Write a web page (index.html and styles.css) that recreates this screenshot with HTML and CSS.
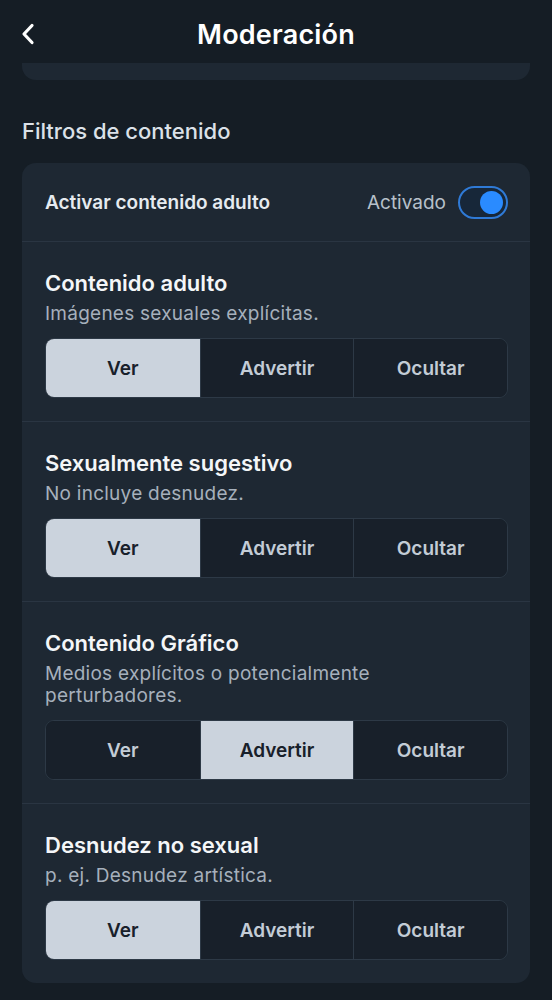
FILE: index.html
```html
<!DOCTYPE html>
<html lang="es">
<head>
    <meta charset="UTF-8">
    <meta name="viewport" content="width=device-width, initial-scale=1.0">
    <title>Moderación</title>
    <link rel="stylesheet" href="styles.css">
</head>
<body>

<div class="screen">

    <!-- Header -->
    <header class="topbar">
        <button class="back" aria-label="Atrás">
            <svg width="18" height="24" viewBox="0 0 18 24" fill="none">
                <path d="M13 3.5 L5 12 L13 20.5" stroke="#fff" stroke-width="3.2" stroke-linecap="round" stroke-linejoin="round"/>
            </svg>
        </button>
        <h1>Moderación</h1>
    </header>

    <div class="content">

        <!-- bottom of the previous card, scrolled under the header -->
        <div class="card card-cut"></div>

        <h2 class="section-title">Filtros de contenido</h2>

        <div class="card">

            <div class="row toggle-row">
                <span class="row-label">Activar contenido adulto</span>
                <span class="toggle-wrap">
                    <span class="toggle-text">Activado</span>
                    <span class="toggle on"><span class="knob"></span></span>
                </span>
            </div>

            <div class="filter">
                <div class="filter-title">Contenido adulto</div>
                <div class="filter-desc">Imágenes sexuales explícitas.</div>
                <div class="segmented">
                    <button class="seg selected">Ver</button>
                    <button class="seg">Advertir</button>
                    <button class="seg">Ocultar</button>
                </div>
            </div>

            <div class="filter">
                <div class="filter-title">Sexualmente sugestivo</div>
                <div class="filter-desc">No incluye desnudez.</div>
                <div class="segmented">
                    <button class="seg selected">Ver</button>
                    <button class="seg">Advertir</button>
                    <button class="seg">Ocultar</button>
                </div>
            </div>

            <div class="filter">
                <div class="filter-title">Contenido Gráfico</div>
                <div class="filter-desc">Medios explícitos o potencialmente perturbadores.</div>
                <div class="segmented">
                    <button class="seg">Ver</button>
                    <button class="seg selected">Advertir</button>
                    <button class="seg">Ocultar</button>
                </div>
            </div>

            <div class="filter">
                <div class="filter-title">Desnudez no sexual</div>
                <div class="filter-desc">p. ej. Desnudez artística.</div>
                <div class="segmented">
                    <button class="seg selected">Ver</button>
                    <button class="seg">Advertir</button>
                    <button class="seg">Ocultar</button>
                </div>
            </div>

        </div>
    </div>
</div>

</body>
</html>
```

FILE: styles.css
```css
* {
    box-sizing: border-box;
}

html, body {
    margin: 0;
    background-color: #151d25;
}

body {
    font-family: 'Inter', 'Noto Sans', sans-serif;
    color: #fff;
    height: 1000px;
    overflow: hidden;
}

.topbar {
    height: 63px;
    display: flex;
    align-items: center;
    justify-content: center;
    position: relative;
    background-color: #151d25;
    padding-top: 6px;
}

.topbar h1 {
    margin: 0;
    font-size: 27px;
    font-weight: 600;
    letter-spacing: 0.2px;
}

.back {
    position: absolute;
    left: 19px;
    top: 22px;
    background: none;
    border: none;
    padding: 0;
    cursor: pointer;
}

.content {
    padding: 0 22px;
}

.card {
    background-color: #1e2833;
    border-radius: 14px;
}

.card-cut {
    height: 17px;
    border-top-left-radius: 0;
    border-top-right-radius: 0;
}

.section-title {
    margin: 37px 0 18px;
    font-size: 22px;
    line-height: 28px;
    font-weight: 500;
    color: #dbe1e8;
}

.row {
    display: flex;
    align-items: center;
    justify-content: space-between;
    padding: 0 22px 0 23px;
}

.toggle-row {
    height: 79px;
    padding-top: 1px;
    border-bottom: 1px solid #2a3542;
}

.row-label {
    font-size: 19px;
    font-weight: 600;
    color: #e6ebf0;
}

.toggle-wrap {
    display: flex;
    align-items: center;
    gap: 12px;
}

.toggle-text {
    font-size: 19px;
    color: #b7c0ca;
}

.toggle {
    width: 50px;
    height: 33px;
    border-radius: 17px;
    border: 2px solid #2f7ad6;
    background-color: #172739;
    display: flex;
    align-items: center;
    padding: 0 3px;
}

.toggle.on {
    justify-content: flex-end;
}

.knob {
    width: 23px;
    height: 23px;
    border-radius: 50%;
    background-color: #2a8bff;
}

.filter {
    padding: 27px 22px 23px 23px;
    border-bottom: 1px solid #2a3542;
}

.filter:last-child {
    border-bottom: none;
}

.filter-title {
    font-size: 22px;
    line-height: 28px;
    font-weight: 600;
    color: #f4f6f8;
}

.filter-desc {
    margin-top: 6px;
    font-size: 19px;
    line-height: 22px;
    letter-spacing: 0.25px;
    color: #a6b0bc;
}

.segmented {
    margin-top: 13px;
    height: 60px;
    display: grid;
    grid-template-columns: 1fr 1fr 1fr;
    border: 1px solid #2d3946;
    border-radius: 9px;
    overflow: hidden;
    background-color: #18202a;
}

.seg {
    font-family: inherit;
    font-size: 19px;
    font-weight: 600;
    color: #c3ccd6;
    background-color: #18202a;
    border: none;
    border-left: 1px solid #2d3946;
    cursor: pointer;
}

.seg:first-child {
    border-left: none;
}

.seg.selected {
    background-color: #cbd3dd;
    color: #18202a;
}
```
